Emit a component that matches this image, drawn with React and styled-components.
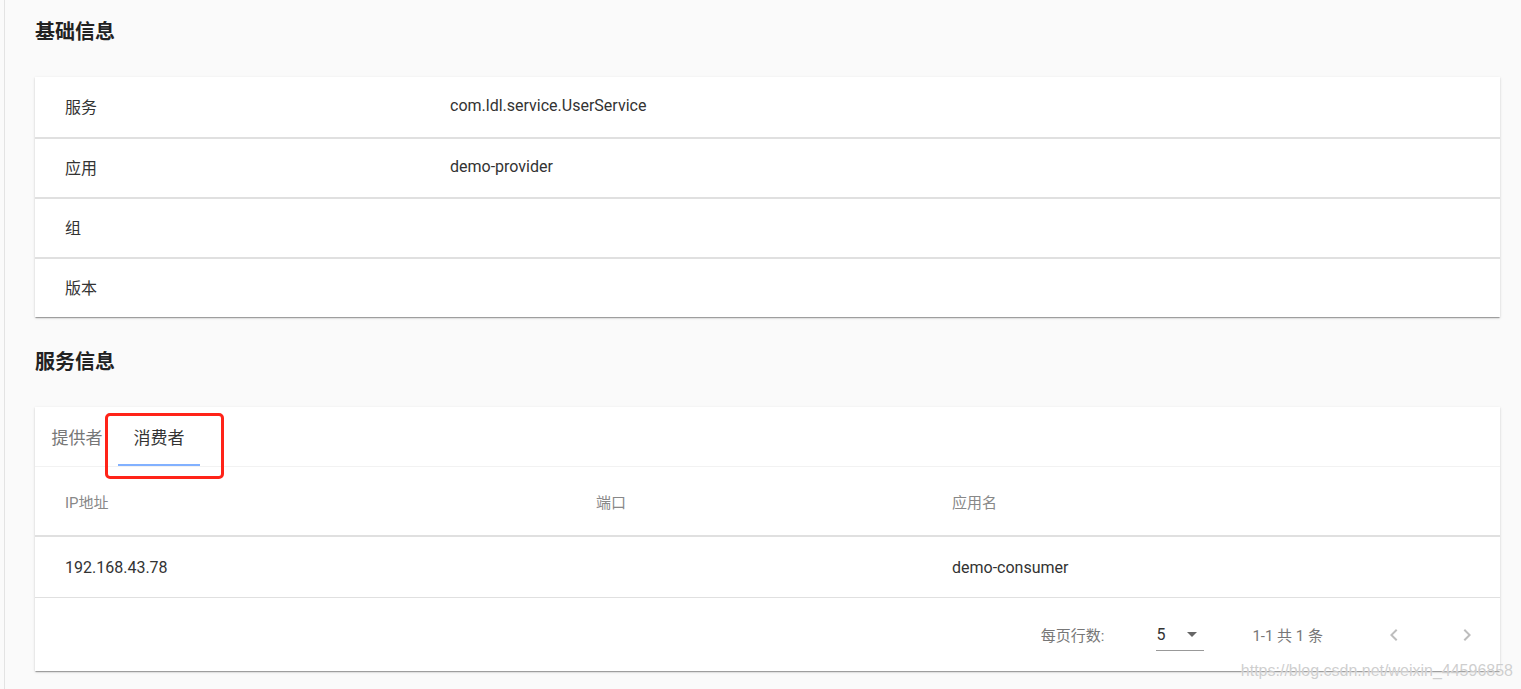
import React from 'react';
import styled, {createGlobalStyle} from 'styled-components';

const GlobalStyle = createGlobalStyle`
  html, body {
    margin: 0;
    padding: 0;
    background: #fafafa;
  }
  body {
    font-family: Roboto, "Noto Sans CJK SC", sans-serif;
    color: rgba(0, 0, 0, 0.87);
  }
`;

const baseInfo = [
  {label: '服务', value: 'com.ldl.service.UserService'},
  {label: '应用', value: 'demo-provider'},
  {label: '组', value: ''},
  {label: '版本', value: ''},
];

const consumers = [{ip: '192.168.43.78', port: '', app: 'demo-consumer'}];

const Page = () => {
  return (
    <>
      <GlobalStyle />
      <Frame>
        <Content>
          <SectionTitle>基础信息</SectionTitle>
          <Card>
            {baseInfo.map((row) => (
              <InfoRow key={row.label}>
                <InfoLabel>{row.label}</InfoLabel>
                <InfoValue>{row.value}</InfoValue>
              </InfoRow>
            ))}
          </Card>

          <SectionTitle top="33px">服务信息</SectionTitle>
          <Card>
            <TabBar>
              <Tab>提供者</Tab>
              <Tab active>消费者</Tab>
            </TabBar>
            <Highlight />
            <TableRow header>
              <HeadCell>IP地址</HeadCell>
              <HeadCell>端口</HeadCell>
              <HeadCell>应用名</HeadCell>
            </TableRow>
            {consumers.map((c) => (
              <TableRow key={c.ip}>
                <Cell>{c.ip}</Cell>
                <Cell>{c.port}</Cell>
                <Cell>{c.app}</Cell>
              </TableRow>
            ))}
            <Footer>
              <FooterText>每页行数:</FooterText>
              <PerPage>
                <span>5</span>
                <svg width="24" height="24" viewBox="0 0 24 24">
                  <path d="M7 10l5 5 5-5z" fill="#666" />
                </svg>
              </PerPage>
              <FooterText>1-1 共 1 条</FooterText>
              <PageButtons>
                <PageButton>
                  <svg width="24" height="24" viewBox="0 0 24 24">
                    <path d="M15.41 7.41L14 6l-6 6 6 6 1.41-1.41L10.83 12z" fill="rgba(0,0,0,0.26)" />
                  </svg>
                </PageButton>
                <PageButton>
                  <svg width="24" height="24" viewBox="0 0 24 24">
                    <path d="M10 6L8.59 7.41 13.17 12l-4.58 4.59L10 18l6-6z" fill="rgba(0,0,0,0.26)" />
                  </svg>
                </PageButton>
              </PageButtons>
            </Footer>
          </Card>
        </Content>
        <Watermark>https://blog.csdn.net/weixin_44596858</Watermark>
      </Frame>
    </>
  );
};

export default function App() {
  return <Page />;
}

const Frame = styled.div`
  position: relative;
  min-height: 689px;
  margin-left: 4px;
  border-left: 1px solid #e3e3e3;
  box-sizing: border-box;
  overflow: hidden;
`;

const Content = styled.div`
  padding: 0 21px 0 30px;
`;

const SectionTitle = styled.h2`
  margin: 0;
  padding-top: ${(props) => props.top || '20px'};
  height: 57px;
  font-size: 20px;
  font-weight: 700;
  line-height: 24px;
  color: #222;
  box-sizing: content-box;
`;

const Card = styled.div`
  position: relative;
  background: #fff;
  box-shadow: 0 2px 1px -1px rgba(0, 0, 0, 0.2), 0 1px 1px 0 rgba(0, 0, 0, 0.14), 0 1px 3px 0 rgba(0, 0, 0, 0.12);
`;

const InfoRow = styled.div`
  display: flex;
  align-items: center;
  height: 60px;
  padding-bottom: 3px;
  box-sizing: border-box;
  font-size: 16px;
  color: #333;
  & + & {
    border-top: 2px solid #e0e0e0;
  }
`;

const InfoLabel = styled.div`
  width: 385px;
  padding-left: 30px;
`;

const InfoValue = styled.div`
  flex: 1;
`;

const TabBar = styled.div`
  display: flex;
  height: 60px;
  padding-left: 1px;
  border-bottom: 1px solid #f2f2f2;
  box-sizing: border-box;
`;

const Tab = styled.div`
  position: relative;
  width: 82px;
  display: flex;
  align-items: center;
  justify-content: center;
  font-size: 17px;
  color: ${(props) => (props.active ? '#333' : '#777')};
  &::after {
    content: '';
    display: ${(props) => (props.active ? 'block' : 'none')};
    position: absolute;
    left: 0;
    right: 0;
    bottom: 0;
    height: 2px;
    background: #82b1ff;
  }
`;

const Highlight = styled.div`
  position: absolute;
  left: 70px;
  top: 6px;
  width: 119px;
  height: 66px;
  border: 3px solid #ff2318;
  border-radius: 5px;
  box-sizing: border-box;
  pointer-events: none;
`;

const TableRow = styled.div`
  display: grid;
  grid-template-columns: 531px 356px 1fr;
  align-items: center;
  height: ${(props) => (props.header ? '70px' : '61px')};
  border-bottom: ${(props) => (props.header ? '2px solid #e0e0e0' : '1px solid #e0e0e0')};
  box-sizing: border-box;
`;

const HeadCell = styled.div`
  padding-left: 30px;
  font-size: 15px;
  color: #888;
`;

const Cell = styled.div`
  padding-left: 30px;
  font-size: 16px;
  color: #333;
`;

const Footer = styled.div`
  display: flex;
  align-items: center;
  justify-content: flex-end;
  height: 73px;
  padding-right: 21px;
`;

const FooterText = styled.span`
  font-size: 15px;
  color: #777;
`;

const PerPage = styled.div`
  display: flex;
  align-items: center;
  justify-content: space-between;
  width: 48px;
  height: 32px;
  margin: 0 48px 0 52px;
  padding-top: 8px;
  border-bottom: 1px solid #999;
  box-sizing: border-box;
  font-size: 16px;
  color: #333;
  span {
    padding-bottom: 8px;
  }
  svg {
    margin-bottom: 8px;
  }
`;

const PageButtons = styled.div`
  display: flex;
  gap: 49px;
  margin-left: 59px;
`;

const PageButton = styled.div`
  width: 24px;
  height: 24px;
  display: flex;
  align-items: center;
  justify-content: center;
`;

const Watermark = styled.div`
  position: absolute;
  right: 8px;
  bottom: 9px;
  font-family: "Liberation Sans", Arial, sans-serif;
  font-size: 16px;
  color: rgba(190, 190, 190, 0.75);
  text-shadow: 0 0 1px #fff;
  pointer-events: none;
`;
